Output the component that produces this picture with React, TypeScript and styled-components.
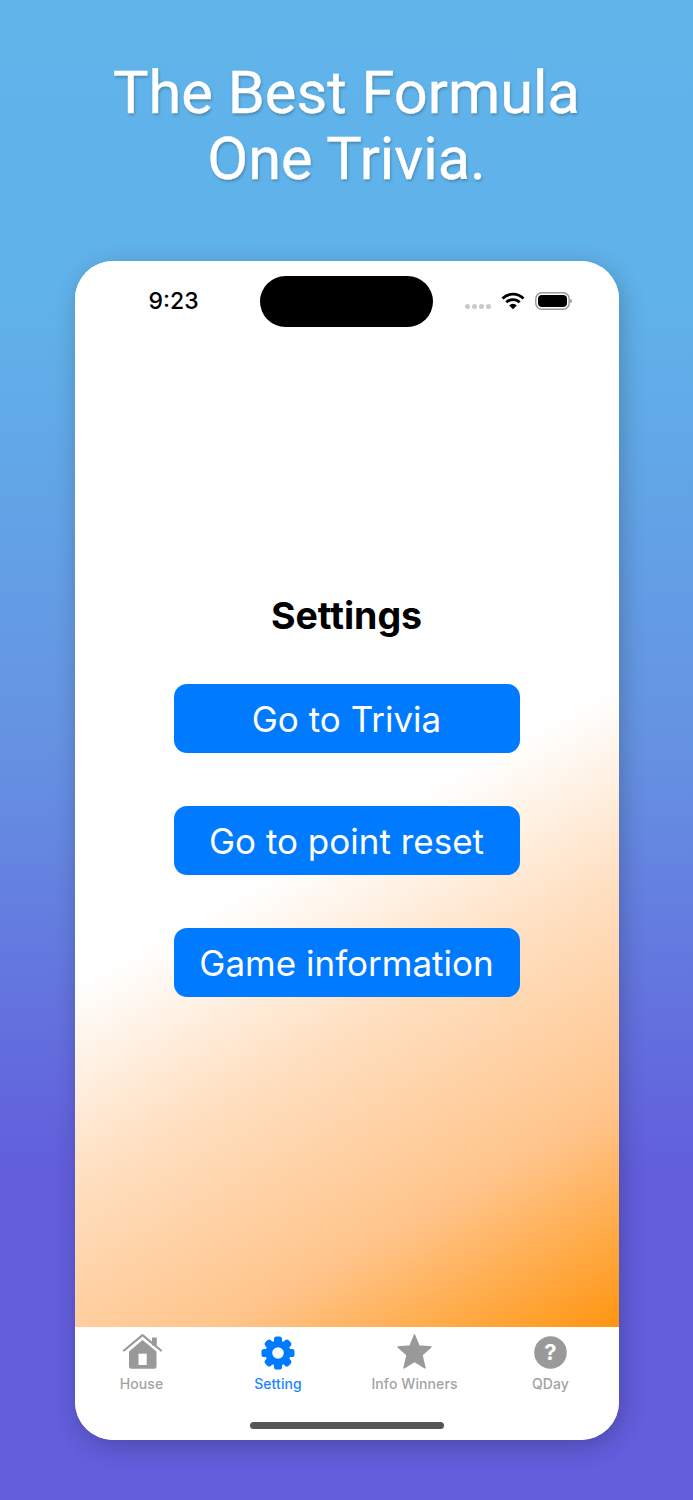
import React from 'react';
import styled, { createGlobalStyle } from 'styled-components';

const GlobalStyle = createGlobalStyle`
  html, body {
    margin: 0;
    padding: 0;
    background: #625fdc;
  }
`;

const Backdrop = styled.div`
  width: 693px;
  height: 1500px;
  box-sizing: border-box;
  overflow: hidden;
  padding-top: 60px;
  display: flex;
  flex-direction: column;
  align-items: center;
  background: linear-gradient(180deg, #60b4ea 0%, #60b2ea 20%, #6592e2 50%, #625edc 78%, #625edc 100%);
  font-family: Inter, 'Liberation Sans', sans-serif;
`;

const Headline = styled.h1`
  margin: 0 0 69px;
  width: 600px;
  text-align: center;
  font-family: Roboto, 'Liberation Sans', sans-serif;
  font-weight: 400;
  font-size: 59.6px;
  line-height: 66px;
  color: #fff;
  -webkit-text-stroke: 0.4px #fff;
  text-shadow: 1px 2px 3px rgba(0, 0, 0, 0.25);
`;

const Phone = styled.div`
  width: 544px;
  height: 1179px;
  border-radius: 38px;
  overflow: hidden;
  display: flex;
  flex-direction: column;
  background: #fff;
  box-shadow: 3px 6px 24px rgba(0, 0, 0, 0.22);
`;

const Screen = styled.div`
  flex: 1;
  display: flex;
  flex-direction: column;
  background: linear-gradient(151deg, #fff 0%, #fff 53%, #ffe0c2 67%, #ffc48a 84%, #ff9510 100%);
`;

const StatusBar = styled.div`
  height: 50px;
  padding: 15px 47px 0 74px;
  display: flex;
  align-items: center;
`;

const Clock = styled.span`
  width: 111px;
  font-size: 23px;
  font-weight: 500;
  color: #000;
`;

const Island = styled.div`
  width: 173px;
  height: 51px;
  border-radius: 26px;
  background: #000;
`;

const StatusIcons = styled.div`
  flex: 1;
  display: flex;
  align-items: center;
  justify-content: flex-end;
  gap: 10px;
`;

const SignalDots = styled.div`
  display: flex;
  gap: 2px;
  margin-top: 11px;
`;

const SignalDot = styled.span`
  width: 5px;
  height: 5px;
  border-radius: 50%;
  background: #c9c9c9;
`;

const ButtonStack = styled.div`
  margin-top: 267px;
  display: flex;
  flex-direction: column;
  align-items: center;
`;

const Title = styled.h2`
  margin: 0 0 45px;
  font-size: 37.5px;
  line-height: 46px;
  font-weight: 700;
  color: #000;
`;

const ActionButton = styled.button`
  width: 346px;
  height: 69px;
  margin-bottom: 53px;
  border: none;
  border-radius: 13px;
  background: #007aff;
  color: #fff;
  font-family: inherit;
  font-size: 35px;
  font-weight: 400;
`;

const TabBar = styled.div`
  height: 113px;
  box-sizing: border-box;
  padding-top: 7px;
  display: flex;
  flex-direction: column;
  background: #fff;
`;

const Tabs = styled.div`
  margin-left: -1px;
  display: grid;
  grid-template-columns: 136px 137px 136px 136px;
`;

const Tab = styled.div<{ $active?: boolean }>`
  display: flex;
  flex-direction: column;
  align-items: center;
  color: ${(p) => (p.$active ? '#007aff' : '#999999')};
`;

const TabLabel = styled.span<{ $active?: boolean }>`
  margin-top: 5px;
  font-size: 14px;
  line-height: 18px;
  font-weight: 500;
  letter-spacing: 0.1px;
  color: ${(p) => (p.$active ? '#1a86ff' : '#a3a3a3')};
`;

const HomeIndicator = styled.div`
  width: 194px;
  height: 7px;
  margin: 29px auto 0;
  border-radius: 4px;
  background: #555;
`;

const TabIconSvg = styled.svg`
  width: 40px;
  height: 36px;
  display: block;
`;

const HouseIcon = () => (
  <TabIconSvg viewBox="0 0 40 36">
    <path d="M7 17.5 20.5 6 34.5 17.5V32.5a2.2 2.2 0 0 1-2.2 2.2H9.2A2.2 2.2 0 0 1 7 32.5z" fill="currentColor" />
    <rect x="16.5" y="19.7" width="8.2" height="11.3" fill="#fff" />
    <path d="M2 16.5 20.5 1.2 39 16.5" fill="none" stroke="currentColor" strokeWidth="2.2" strokeLinecap="round" strokeLinejoin="round" />
    <rect x="30" y="3.5" width="4.8" height="8" fill="currentColor" />
  </TabIconSvg>
);

const GearIcon = () => (
  <TabIconSvg viewBox="0 0 40 36">
    <circle cx="20" cy="19" r="12.6" fill="currentColor" />
    {[0, 45, 90, 135, 180, 225, 270, 315].map((deg) => (
      <rect key={deg} x="16" y="2.5" width="8" height="8" rx="2.6" fill="currentColor" transform={`rotate(${deg} 20 19)`} />
    ))}
    <circle cx="20" cy="19" r="5.8" fill="#fff" />
  </TabIconSvg>
);

const StarIcon = () => (
  <TabIconSvg viewBox="0 0 40 36">
    <path
      d="M19.5 1 24 12 36 13 27 21 30 34 19.5 27.5 9 34 12 21 3 13 15 12z"
      fill="currentColor"
      stroke="currentColor"
      strokeWidth="1.4"
      strokeLinejoin="round"
    />
  </TabIconSvg>
);

const QuestionIcon = () => (
  <TabIconSvg viewBox="0 0 40 36">
    <circle cx="19.5" cy="18.5" r="16.3" fill="currentColor" />
    <text x="19.5" y="26" textAnchor="middle" fontSize="22" fontWeight="700" fontFamily="Inter, sans-serif" fill="#fff">
      ?
    </text>
  </TabIconSvg>
);

const WifiIcon = () => (
  <svg width="24" height="18" viewBox="0 0 24 18">
    <path d="M1.5 6.5a15 15 0 0 1 21 0" fill="none" stroke="#000" strokeWidth="2.8" />
    <path d="M5.3 10.3a9.6 9.6 0 0 1 13.4 0" fill="none" stroke="#000" strokeWidth="2.8" />
    <path d="M8.2 13.4 12 17.2l3.8-3.8a5.4 5.4 0 0 0-7.6 0z" fill="#000" />
  </svg>
);

const BatteryIcon = () => (
  <svg width="37" height="18" viewBox="0 0 37 18">
    <rect x="0.8" y="0.8" width="33.4" height="16.4" rx="6" fill="none" stroke="#999" strokeWidth="1.5" />
    <rect x="3" y="3" width="29" height="12" rx="4" fill="#000" />
    <rect x="35.2" y="7" width="1.6" height="4" rx="0.8" fill="#999" />
  </svg>
);

const tabs = [
  { label: 'House', icon: <HouseIcon /> },
  { label: 'Setting', icon: <GearIcon />, active: true },
  { label: 'Info Winners', icon: <StarIcon /> },
  { label: 'QDay', icon: <QuestionIcon /> },
];

export default function App() {
  return (
    <Backdrop>
      <GlobalStyle />
      <Headline>
        The Best Formula
        <br />
        One Trivia.
      </Headline>
      <Phone>
        <Screen>
          <StatusBar>
            <Clock>9:23</Clock>
            <Island />
            <StatusIcons>
              <SignalDots>
                {[0, 1, 2, 3].map((i) => (
                  <SignalDot key={i} />
                ))}
              </SignalDots>
              <WifiIcon />
              <BatteryIcon />
            </StatusIcons>
          </StatusBar>
          <ButtonStack>
            <Title>Settings</Title>
            <ActionButton>Go to Trivia</ActionButton>
            <ActionButton>Go to point reset</ActionButton>
            <ActionButton>Game information</ActionButton>
          </ButtonStack>
        </Screen>
        <TabBar>
          <Tabs>
            {tabs.map((tab) => (
              <Tab key={tab.label} $active={tab.active}>
                {tab.icon}
                <TabLabel $active={tab.active}>{tab.label}</TabLabel>
              </Tab>
            ))}
          </Tabs>
          <HomeIndicator />
        </TabBar>
      </Phone>
    </Backdrop>
  );
}
